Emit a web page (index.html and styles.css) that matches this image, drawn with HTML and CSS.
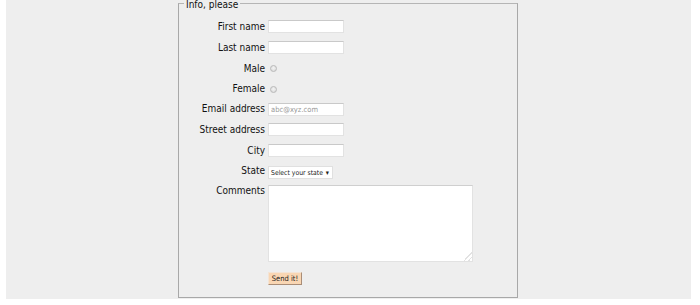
FILE: index.html
```html
<!DOCTYPE html>
<html>
<head>
<meta charset="utf-8">
<link rel="stylesheet" href="styles.css">
</head>
<body>
<div class="page">
  <fieldset class="box">
    <legend class="box-title">Info, please</legend>
    <div class="form">
      <label class="lbl" for="fn">First name</label>
      <div class="cell"><input class="txt" id="fn" type="text"></div>

      <label class="lbl" for="ln">Last name</label>
      <div class="cell"><input class="txt" id="ln" type="text"></div>

      <label class="lbl" for="m">Male</label>
      <div class="cell"><input class="radio" id="m" type="radio" name="g"></div>

      <label class="lbl" for="f">Female</label>
      <div class="cell"><input class="radio" id="f" type="radio" name="g"></div>

      <label class="lbl" for="em">Email address</label>
      <div class="cell"><input class="txt" id="em" type="text" placeholder="abc@xyz.com"></div>

      <label class="lbl" for="st">Street address</label>
      <div class="cell"><input class="txt" id="st" type="text"></div>

      <label class="lbl" for="ci">City</label>
      <div class="cell"><input class="txt" id="ci" type="text"></div>

      <label class="lbl" for="sa">State</label>
      <div class="cell">
        <div class="select" id="sa"><span class="select-text">Select your state</span><span class="select-arrow">▾</span></div>
      </div>

      <label class="lbl lbl-top" for="co">Comments</label>
      <div class="cell cell-top"><textarea class="area" id="co"></textarea></div>

      <div class="cell cell-btn"><button class="btn" type="button">Send it!</button></div>
    </div>
  </fieldset>
</div>
</body>
</html>
```
FILE: styles.css
```css
html, body {
  margin: 0;
  padding: 0;
  background: #ffffff;
}
.page {
  margin-left: 6px;
  width: 685px;
  height: 299px;
  background: #eeeeee;
  overflow: hidden;
  font-family: "DejaVu Sans Condensed", "DejaVu Sans", sans-serif;
  font-stretch: condensed;
  font-size: 10px;
  color: #111111;
}
.box {
  box-sizing: border-box;
  width: 340px;
  height: 299px;
  margin: -1px 0 0 172px;
  padding: 8px 4px 0 5px;
  border: 1px solid #a8a8a8;
  border-top-color: #b5b5b5;
}
.box-title {
  padding: 2px 2px 0;
  line-height: 7px;
}
.form {
  display: grid;
  grid-template-columns: 81px 1fr;
  column-gap: 3px;
  grid-template-rows: 21px 21px 21px 20px 20px 21px 21px 20px auto auto;
  align-items: center;
}
.lbl {
  text-align: right;
  line-height: 12px;
  white-space: nowrap;
}
.cell {
  display: flex;
  align-items: center;
}
.txt {
  box-sizing: border-box;
  width: 76px;
  height: 13px;
  margin: 0;
  padding: 0 2px;
  border: 1px solid #e2e2e2;
  border-top-color: #c9c9c9;
  background: #ffffff;
  font-family: "DejaVu Sans Condensed", "DejaVu Sans", sans-serif;
  font-stretch: condensed;
  font-size: 7.5px;
  outline: none;
}
.txt::placeholder {
  color: #9a9a9a;
}
.radio {
  appearance: none;
  -webkit-appearance: none;
  box-sizing: border-box;
  width: 7px;
  height: 7px;
  margin: 0 0 0 2px;
  border: 1px solid #b9b9b9;
  border-radius: 50%;
  background: radial-gradient(circle at 50% 40%, #f4f4f4, #d6d6d6);
}
.select {
  box-sizing: border-box;
  width: 65px;
  height: 13px;
  margin-top: 3px;
  padding: 0 3px 0 2px;
  display: flex;
  align-items: center;
  justify-content: space-between;
  white-space: nowrap;
  overflow: hidden;
  background: #ffffff;
  border: 1px solid #e0e0e0;
  font-size: 6.8px;
  color: #222222;
}
.select-arrow {
  font-size: 7px;
  font-family: "DejaVu Sans", sans-serif;
}
.lbl-top, .cell-top {
  align-self: start;
  margin-top: 4px;
}
.area {
  box-sizing: border-box;
  width: 205px;
  height: 77px;
  margin: 0;
  padding: 2px;
  border: 1px solid #e2e2e2;
  border-top-color: #cfcfcf;
  background: #ffffff;
  outline: none;
}
.area::-webkit-resizer {
  background: linear-gradient(135deg, transparent 70%, #e2e2e2 70%, #e2e2e2 76%, transparent 76%, transparent 84%, #e2e2e2 84%, #e2e2e2 90%, transparent 90%);
}
.cell-btn {
  grid-column: 2;
  margin-top: 10px;
}
.btn {
  box-sizing: border-box;
  width: 34px;
  height: 13px;
  margin: 0;
  padding: 0;
  background: #f9d6b3;
  border: 1px solid #f3e4d6;
  border-right-color: #a98d77;
  border-bottom-color: #a98d77;
  font-family: "DejaVu Sans Condensed", "DejaVu Sans", sans-serif;
  font-stretch: condensed;
  font-size: 7.5px;
  color: #1a1a1a;
  line-height: 11px;
}
```
